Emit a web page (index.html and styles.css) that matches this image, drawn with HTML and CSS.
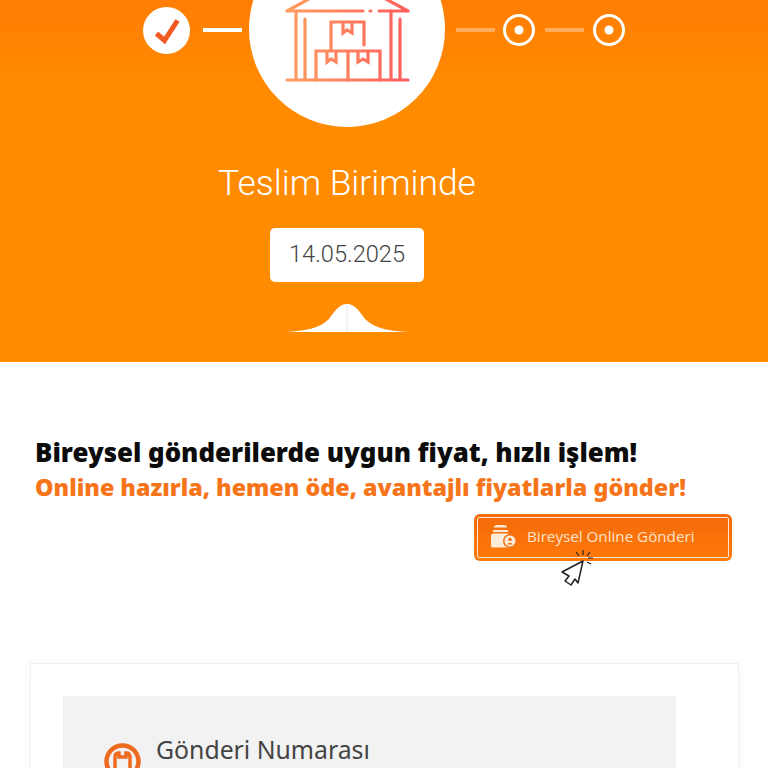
FILE: index.html
```html
<!DOCTYPE html>
<html lang="en">
<head>
    <meta charset="UTF-8">
    <meta name="viewport" content="width=device-width, initial-scale=1.0">
    <title>Gönderi Takip</title>
    <link rel="stylesheet" href="styles.css">
</head>
<body>
    <!-- Status header -->
    <section class="hero">
        <div class="steps">
            <span class="step-done">
                <svg width="47" height="47" viewBox="0 0 47 47"><path d="M13.500 26.500l8 7 13-20" fill="none" stroke="#f0591f" stroke-width="5"/></svg>
            </span>
            <span class="step-line"></span>
            <span class="step-current">
                <svg width="125" height="102" viewBox="0 0 125 102">
                    <defs>
                        <linearGradient id="house-grad" gradientUnits="userSpaceOnUse" x1="0" y1="0" x2="125" y2="0">
                            <stop offset="0" stop-color="#ff9f5f"/>
                            <stop offset="1" stop-color="#ff5c5c"/>
                        </linearGradient>
                    </defs>
                    <g fill="none" stroke="url(#house-grad)" stroke-width="3.200" stroke-linecap="round">
                        <path d="M2 31L62 -2L123 31M2 31H78M85 31H86M94 31H123"/>
                        <path d="M11 31V100M20 39V100M106 31V100M115 39V100M2 100H123"/>
                        <path d="M46 70V42H79V65M58 42V53L62 50L67 53V42"/>
                        <path d="M31 100V71H95V100M63 71V100M42 71V82L46 79L51 82V71M73 71V82L78 79L83 82V71"/>
                    </g>
                </svg>
            </span>
            <span class="step-line step-line-next"></span>
            <span class="step-todo">
                <svg width="32" height="32" viewBox="0 0 32 32"><circle cx="16" cy="16" r="14.500" fill="none" stroke="#fff" stroke-width="3"/><circle cx="16" cy="16" r="4.500" fill="#fff"/></svg>
            </span>
            <span class="step-line step-line-next"></span>
            <span class="step-todo">
                <svg width="32" height="32" viewBox="0 0 32 32"><circle cx="16" cy="16" r="14.500" fill="none" stroke="#fff" stroke-width="3"/><circle cx="16" cy="16" r="4.500" fill="#fff"/></svg>
            </span>
        </div>
        <div class="status">
            <h1 class="status-title">Teslim Biriminde</h1>
            <div class="status-date">14.05.2025</div>
            <svg class="status-bump" width="124" height="28" viewBox="0 0 124 28">
                <path d="M0 28C22 27 35 24 44 15C50 7 54 0 62 0C70 0 74 7 80 15C89 24 102 27 124 28Z" fill="#fff"/>
                <path d="M62 1V27" stroke="#e8e8e8" stroke-width="1"/>
            </svg>
        </div>
    </section>

    <!-- Campaign banner -->
    <section class="banner">
        <h2 class="banner-title">Bireysel gönderilerde uygun fiyat, hızlı işlem!</h2>
        <p class="banner-sub">Online hazırla, hemen öde, avantajlı fiyatlarla gönder!</p>
        <div class="banner-action">
            <a class="online-btn" href="#">
                <span class="online-btn-inner">
                    <svg width="27" height="24" viewBox="0 0 27 24">
                        <path d="M4 3.500Q4 1 7 1H14Q17 1 17 3.500ZM3 6H18V8H3ZM1 12Q1 9.500 4 9.500H17Q20 9.500 20 12V22Q20 23.500 18 23.500H3Q1 23.500 1 22Z" fill="#fdebd9"/>
                        <circle cx="20" cy="17" r="7" fill="#f36f12"/>
                        <circle cx="20" cy="17" r="5.500" fill="#fdebd9"/>
                        <circle cx="20" cy="15.500" r="1.800" fill="#f36f12"/>
                        <path d="M16.800 20.500Q20 16.800 23.200 20.500Z" fill="#f36f12"/>
                    </svg>
                    Bireysel Online Gönderi
                </span>
            </a>
            <svg class="cursor-icon" width="36" height="38" viewBox="0 0 36 38">
                <path d="M23 12L2 23L9 27L5 32L11 36L15 30L18 34Z" fill="#fff" stroke="#222" stroke-width="1.500" stroke-linejoin="round"/>
                <path d="M23 1V6M16 3L19 7M30 3L27 7M33 9H28M31 15L27 13" fill="none" stroke="#222" stroke-width="1.200"/>
            </svg>
        </div>
    </section>

    <!-- Shipment details -->
    <section class="detail-card">
        <div class="detail-panel">
            <svg class="detail-icon" width="37" height="37" viewBox="0 0 37 37">
                <circle cx="18.500" cy="18.500" r="16" fill="none" stroke="#ee6a1f" stroke-width="4.500"/>
                <path d="M11 27V14Q11 10 15 10V14H22V10Q26 10 26 14V27" fill="none" stroke="#ee6a1f" stroke-width="3.500"/>
            </svg>
            <h3 class="detail-label">Gönderi Numarası</h3>
        </div>
    </section>
</body>
</html>
```

FILE: styles.css
```css
/* General Styles */
html, body {
    height: 768px;
    overflow: hidden;
}

body {
    margin: 0;
    background-color: #fff;
    font-family: Roboto, sans-serif;
    color: #444;
}

/* Status header */
.hero {
    height: 362px;
    overflow: hidden;
    background: linear-gradient(#ff7d03, #ff8b00 90px);
}

.steps {
    display: flex;
    align-items: center;
    justify-content: center;
    height: 198px;
    margin: -69px 0 0 0;
}

.step-done {
    display: flex;
    width: 47px;
    height: 47px;
    margin-right: 13px;
    border-radius: 50%;
    background-color: #fff;
}

.step-line {
    width: 39px;
    height: 4px;
    background-color: #fff;
}

.step-line-next {
    background-color: rgba(255, 255, 255, 0.35);
}

.step-current {
    display: flex;
    align-items: center;
    justify-content: center;
    align-self: flex-start;
    box-sizing: border-box;
    width: 196px;
    height: 196px;
    margin: 0 11px 0 7px;
    padding-top: 4px;
    border-radius: 50%;
    background-color: #fff;
}

.step-todo {
    display: flex;
    margin: 0 10px 0 8px;
}

.step-todo:last-child {
    margin: 0 0 0 9px;
}

.status {
    display: flex;
    flex-direction: column;
    align-items: center;
    width: 694px;
    margin-top: 34px;
}

.status-title {
    margin: 0;
    font-size: 35.400px;
    font-weight: 300;
    line-height: 40px;
    color: #fff;
}

.status-date {
    width: 154px;
    height: 54px;
    margin-top: 25px;
    border-radius: 5px;
    background-color: #fff;
    font-size: 23.600px;
    font-weight: 300;
    line-height: 52px;
    text-align: center;
}

.status-bump {
    margin-top: 22px;
}

/* Campaign banner */
.banner {
    padding: 72px 36px 0 35px;
}

.banner-title, .banner-sub {
    margin: 0;
    font-family: "Noto Sans", sans-serif;
    font-weight: 900;
    white-space: nowrap;
}

.banner-title {
    font-size: 25.850px;
    line-height: 36px;
    color: #0c0c0c;
}

.banner-sub {
    font-size: 23.300px;
    line-height: 34px;
    color: #f6751b;
}

.banner-action {
    position: relative;
    display: flex;
    justify-content: flex-end;
    margin-top: 10px;
}

.online-btn {
    display: block;
    box-sizing: border-box;
    width: 258px;
    height: 47px;
    padding: 3px;
    border-radius: 6px;
    background: linear-gradient(#f36a0c, #ff7a08);
    text-decoration: none;
}

.online-btn-inner {
    display: flex;
    align-items: center;
    gap: 10px;
    box-sizing: border-box;
    height: 100%;
    padding: 0 0 4px 12px;
    border: 1.500px solid #fde3c8;
    border-radius: 2px;
    font-family: "Open Sans", sans-serif;
    font-size: 15.200px;
    font-weight: 500;
    color: #fde3c8;
}

.cursor-icon {
    position: absolute;
    left: 525px;
    top: 35px;
}

/* Shipment details */
.detail-card {
    box-sizing: border-box;
    width: 709px;
    height: 300px;
    margin: 102px 0 0 30px;
    padding: 32px;
    border: 1px solid #efefef;
    box-shadow: 0 0 12px rgba(0, 0, 0, 0.04);
}

.detail-panel {
    display: flex;
    align-items: flex-start;
    gap: 15px;
    width: 613px;
    height: 240px;
    box-sizing: border-box;
    padding: 36px 41px;
    background-color: #f2f2f2;
}

.detail-icon {
    margin-top: 11px;
}

.detail-label {
    margin: 0;
    font-family: "Noto Sans", sans-serif;
    font-size: 24.800px;
    font-weight: 400;
    line-height: 34px;
    color: #444;
}
```
